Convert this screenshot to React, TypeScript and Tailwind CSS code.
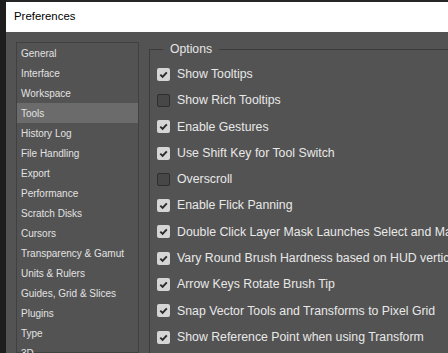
import React from "react";

const sections = [
  "General",
  "Interface",
  "Workspace",
  "Tools",
  "History Log",
  "File Handling",
  "Export",
  "Performance",
  "Scratch Disks",
  "Cursors",
  "Transparency & Gamut",
  "Units & Rulers",
  "Guides, Grid & Slices",
  "Plugins",
  "Type",
  "3D",
  "Technology Previews",
];

const options: { label: string; checked: boolean }[] = [
  { label: "Show Tooltips", checked: true },
  { label: "Show Rich Tooltips", checked: false },
  { label: "Enable Gestures", checked: true },
  { label: "Use Shift Key for Tool Switch", checked: true },
  { label: "Overscroll", checked: false },
  { label: "Enable Flick Panning", checked: true },
  { label: "Double Click Layer Mask Launches Select and Mask", checked: true },
  { label: "Vary Round Brush Hardness based on HUD vertical movement", checked: true },
  { label: "Arrow Keys Rotate Brush Tip", checked: true },
  { label: "Snap Vector Tools and Transforms to Pixel Grid", checked: true },
  { label: "Show Reference Point when using Transform", checked: true },
];

function Checkbox({ checked }: { checked: boolean }) {
  if (!checked) {
    return <div className="h-[13px] w-[13px] shrink-0 rounded-[2px] border border-[#2e2e2e] bg-[#474747]" />;
  }
  return (
    <svg width="13" height="13" viewBox="0 0 13 13" className="shrink-0">
      <rect x="0" y="0" width="13" height="13" rx="2" fill="#d5d5d5" />
      <path d="M3.3 6.6 L5.6 8.9 L9.8 4.3" fill="none" stroke="#2a2a2a" strokeWidth="1.9" />
    </svg>
  );
}

export default function App() {
  return (
    <div
      className="flex h-[353px] w-[448px] overflow-hidden bg-[#1e1e1e]"
      style={{ fontFamily: '"Liberation Sans", Arial, sans-serif' }}
    >
      <div className="w-[6px] shrink-0 bg-[#1e1e1e]" />
      <div className="flex min-w-0 flex-1 flex-col">
        <div className="h-[2px] shrink-0 bg-[#262626]" />
        <div className="flex h-[30px] shrink-0 items-center bg-white pl-[8px] text-[11.4px] text-black">
          Preferences
        </div>
        <div className="flex min-h-0 flex-1 bg-[#535353] pl-[10px] pt-[10px]">
          {/* section list */}
          <div className="w-[123px] shrink-0 border border-[#414141] pt-0 text-[10px] text-[#e2e2e2]">
            {sections.map((s) => (
              <div
                key={s}
                className={`flex h-[20px] items-center whitespace-nowrap pl-[4px] ${
                  s === "Tools" ? "bg-[#6b6b6b]" : ""
                }`}
              >
                {s}
              </div>
            ))}
          </div>

          {/* options group */}
          <div className="relative ml-[10px] mt-[7px] min-w-0 flex-1 border-l border-t border-[#3c3c3c]">
            <div className="absolute -top-[8px] left-[13px] bg-[#535353] px-[7px] text-[12.2px] leading-[14px] text-[#e6e6e6]">
              Options
            </div>
            <div className="pl-[7px] pt-[11px]">
              {options.map((o) => (
                <div key={o.label} className="flex h-[26.3px] items-center gap-[7px]">
                  <Checkbox checked={o.checked} />
                  <span className="whitespace-nowrap text-[12.3px] text-[#e8e8e8]">{o.label}</span>
                </div>
              ))}
            </div>
          </div>
        </div>
      </div>
    </div>
  );
}
